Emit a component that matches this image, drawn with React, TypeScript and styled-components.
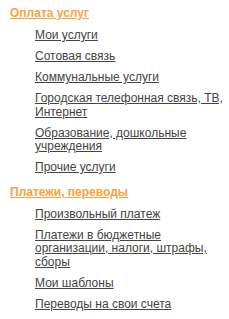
import React from "react";
import styled, { createGlobalStyle } from "styled-components";

const Global = createGlobalStyle`
  html, body { margin: 0; padding: 0; background: #fff; }
  body { font-family: "Liberation Sans", Arial, sans-serif; }
`;

const Nav = styled.nav`
  display: flex;
  flex-direction: column;
  gap: 11px;
  padding: 7px 4px 0 10px;
  width: 229px;
  box-sizing: border-box;
`;

const Section = styled.section`
  display: flex;
  flex-direction: column;
  align-items: flex-start;
  gap: 9px;
`;

const Heading = styled.a`
  display: block;
  font-family: "Liberation Sans", Arial, sans-serif;
  font-size: 12px;
  font-weight: 700;
  line-height: 13px;
  color: #f8a23e;
  text-decoration: underline;
`;

const List = styled.ul`
  display: flex;
  flex-direction: column;
  gap: 7.5px;
  list-style: none;
  margin: 0;
  padding: 0 0 0 25px;
`;

const Item = styled.li`
  font-size: 12px;
  line-height: 13.5px;
`;

const Link = styled.a`
  color: #434343;
  text-decoration: underline;
`;

const sections = [
  {
    title: "Оплата услуг",
    items: [
      "Мои услуги",
      "Сотовая связь",
      "Коммунальные услуги",
      "Городская телефонная связь, ТВ, Интернет",
      "Образование, дошкольные учреждения",
      "Прочие услуги",
    ],
  },
  {
    title: "Платежи, переводы",
    items: [
      "Произвольный платеж",
      "Платежи в бюджетные организации, налоги, штрафы, сборы",
      "Мои шаблоны",
      "Переводы на свои счета",
    ],
  },
];

export default function App() {
  return (
    <>
      <Global />
      <Nav>
        {sections.map((s) => (
          <Section key={s.title}>
            <Heading href="#">{s.title}</Heading>
            <List>
              {s.items.map((it) => (
                <Item key={it}>
                  <Link href="#">{it}</Link>
                </Item>
              ))}
            </List>
          </Section>
        ))}
      </Nav>
    </>
  );
}
